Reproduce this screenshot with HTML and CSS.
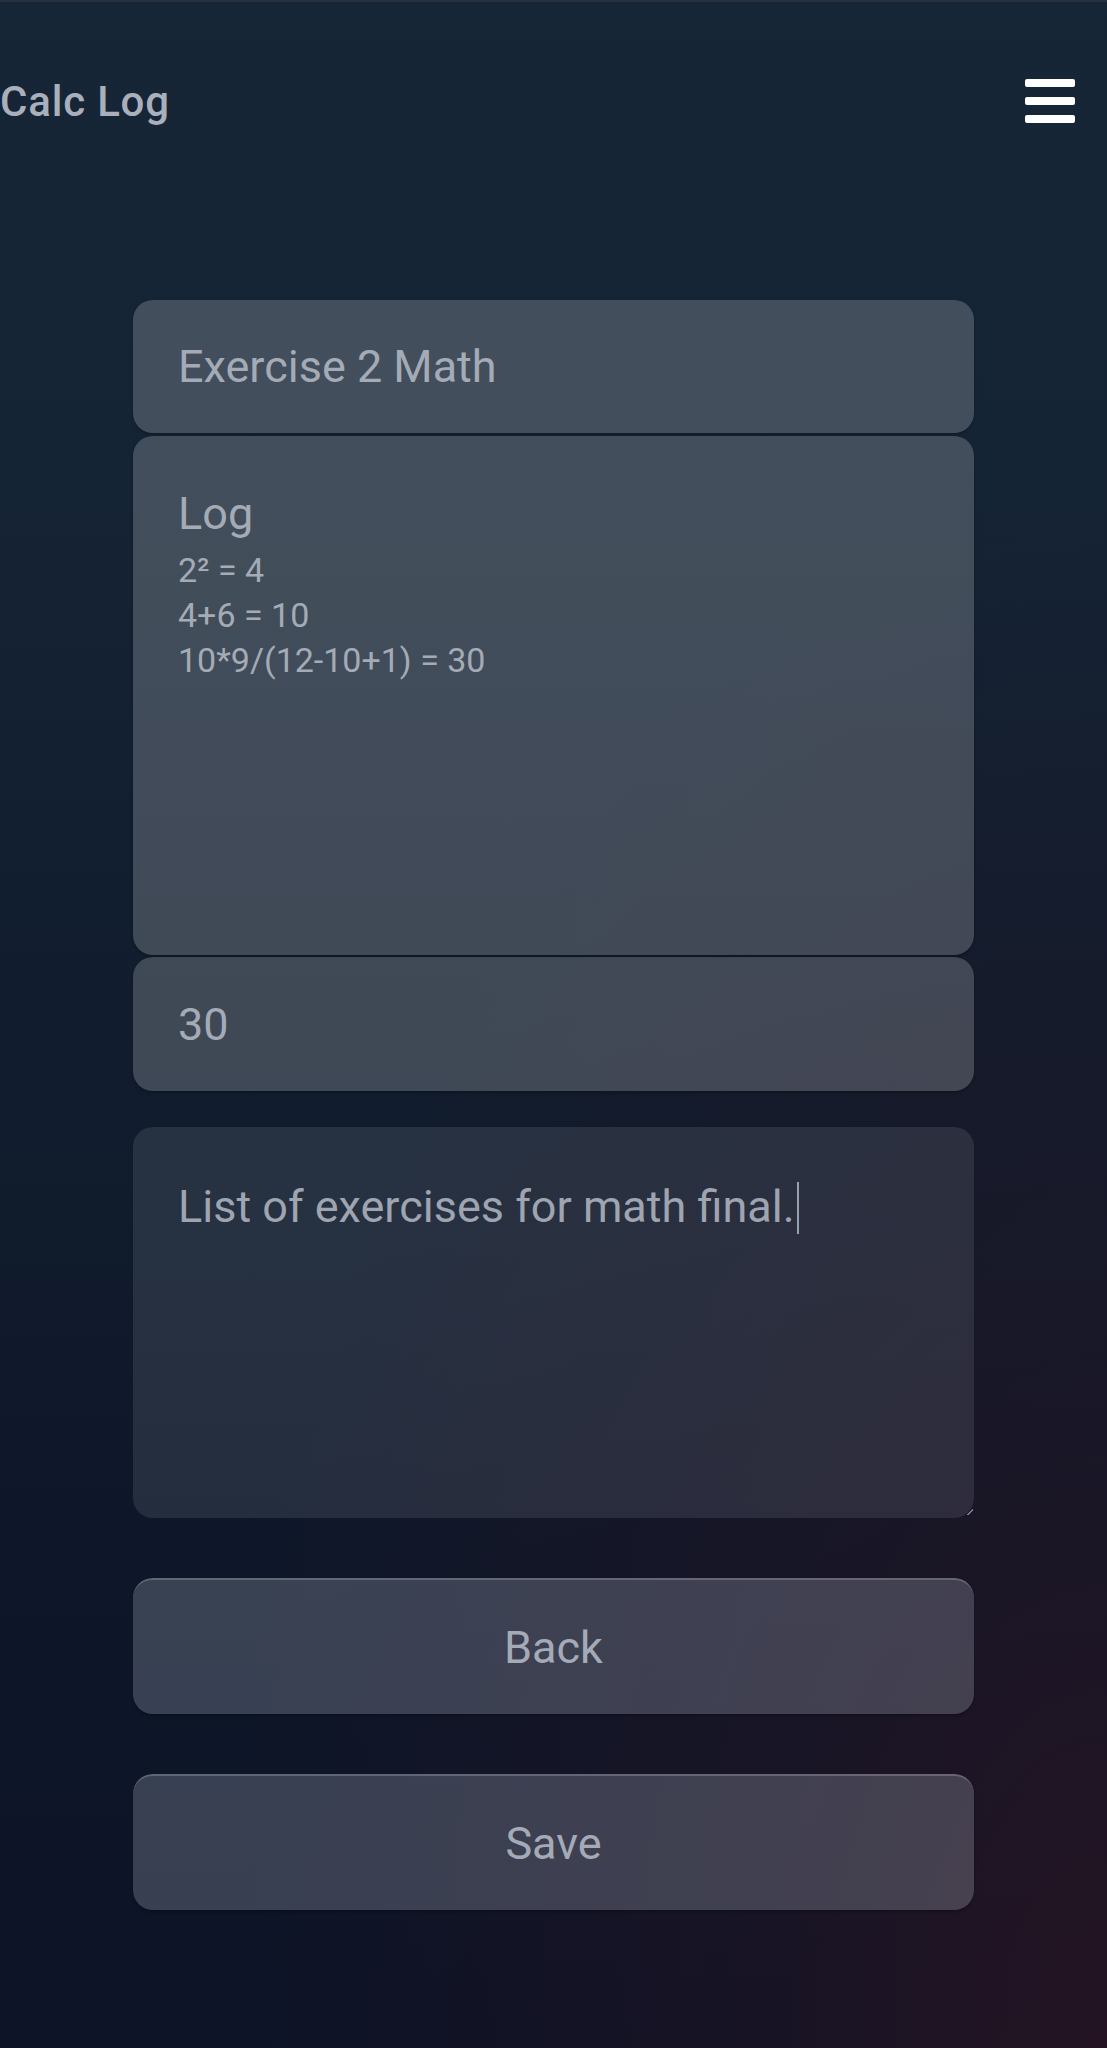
FILE: index.html
```html
<!DOCTYPE html>
<html lang="en">
<head>
<meta charset="utf-8">
<title>Calc Log</title>
<link rel="stylesheet" href="styles.css">
</head>
<body>
<header class="topbar">
  <h1 class="brand">Calc Log</h1>
  <button class="menu" aria-label="Menu"><span></span><span></span><span></span></button>
</header>
<main class="form">
  <div class="field field-title">Exercise 2 Math</div>
  <div class="field field-log">
    <div class="log-title">Log</div>
    <div class="log-lines">
      <div>2² = 4</div>
      <div>4+6 = 10</div>
      <div>10*9/(12-10+1) = 30</div>
    </div>
  </div>
  <div class="field field-result">30</div>
  <div class="notes">List of exercises for math final.<span class="caret"></span><span class="grip"></span></div>
  <div class="actions">
    <button class="btn">Back</button>
    <button class="btn">Save</button>
  </div>
</main>
</body>
</html>
```
FILE: styles.css
```css
html, body {
  margin: 0;
  padding: 0;
}
body {
  width: 1107px;
  min-height: 2048px;
  font-family: Roboto, "Noto Sans", sans-serif;
  color: #a4abb6;
  border-top: 2px solid #26313d;
  box-sizing: border-box;
  background:
    radial-gradient(80% 75% at 100% 100%, rgba(40, 20, 34, 0.85) 0%, rgba(40, 20, 34, 0.4) 40%, rgba(40, 20, 34, 0) 100%),
    linear-gradient(180deg, #172637 0%, #152435 20%, #111d2e 50%, #0e1729 75%, #0c1326 100%);
}
.topbar {
  height: 198px;
  display: flex;
  align-items: center;
  justify-content: space-between;
  padding-right: 32px;
}
.brand {
  margin: 0;
  font-size: 42px;
  font-weight: 500;
  letter-spacing: 0.8px;
  color: #a9b0bb;
}
.menu {
  width: 50px;
  height: 44px;
  padding: 0;
  border: 0;
  background: none;
  display: flex;
  flex-direction: column;
  justify-content: space-between;
}
.menu span {
  display: block;
  height: 8px;
  width: 50px;
  background: #ffffff;
  border-radius: 2px;
}
.form {
  width: 841px;
  margin: 100px auto 0;
  display: flex;
  flex-direction: column;
}
.field {
  box-sizing: border-box;
  border-radius: 20px;
  background: rgba(250, 252, 250, 0.2);
  box-shadow: 0 2px 3px rgba(0, 0, 0, 0.25);
  padding-left: 45px;
  font-size: 45px;
}
.field-title {
  height: 133px;
  display: flex;
  align-items: center;
  margin-bottom: 3px;
}
.field-log {
  height: 519px;
  padding-top: 52px;
  margin-bottom: 2px;
}
.log-title {
  line-height: 52px;
  margin-bottom: 8px;
}
.log-lines {
  font-size: 34px;
  line-height: 45px;
}
.field-result {
  height: 134px;
  display: flex;
  align-items: center;
}
.notes {
  position: relative;
  box-sizing: border-box;
  height: 391px;
  margin-top: 36px;
  padding: 54px 45px 0;
  border-radius: 20px;
  background: rgba(235, 245, 255, 0.1);
  font-size: 45px;
  line-height: 52px;
  color: #9ea4b0;
}
.caret {
  display: inline-block;
  width: 2px;
  height: 52px;
  margin-left: 2px;
  vertical-align: -12px;
  background: #9aa0ab;
}
.grip {
  position: absolute;
  right: 1px;
  bottom: 3px;
  width: 6px;
  height: 6px;
  background: linear-gradient(135deg, transparent 45%, #7d8290 45%, #7d8290 60%, transparent 60%);
}
.actions {
  margin-top: 60px;
  display: flex;
  flex-direction: column;
  gap: 60px;
}
.btn {
  height: 136px;
  border: 0;
  border-top: 2px solid rgba(255, 255, 255, 0.2);
  border-radius: 20px;
  background: rgba(230, 238, 255, 0.2);
  box-shadow: 0 2px 3px rgba(0, 0, 0, 0.25);
  font-family: Roboto, "Noto Sans", sans-serif;
  font-size: 45px;
  color: #a4abb6;
  padding: 0;
}
```
